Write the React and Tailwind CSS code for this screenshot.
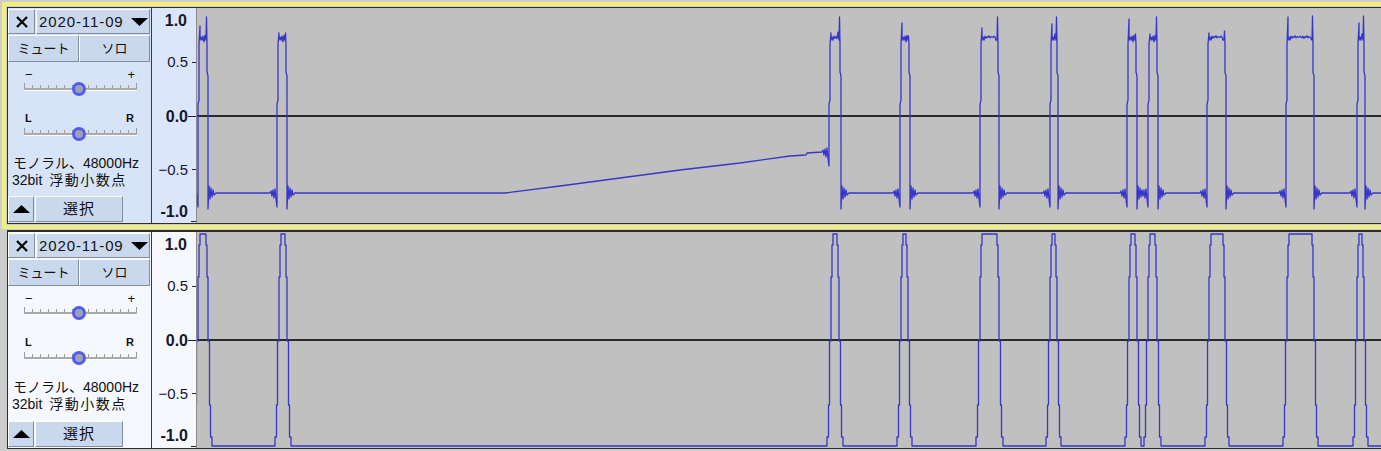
import React from "react";

const J = [0, 2, -2, 3, -1, 1, -3, 2, -1, 0, 1, -2];

// spiky square pulse (original recording)
function spiky({ a, b, sl, sr, base = 193 }) {
  const p = [
    [a - 7, base], [a - 6, base - 2], [a - 5, base + 3], [a - 4, base - 3], [a - 3, base + 5],
    [a - 2, base - 4], [a - 1, base + 6], [a, base + 14],
    [a, 104], [a + 1, 100], [a + 1, 44], [a + 2, sl], [a + 2, 40],
  ];
  for (let x = a + 3, i = 0; x < b - 1; x++, i++) {
    const edge = x - a < 5 || b - x < 4;
    p.push([x, 37 + J[i % J.length] * (edge ? 1.6 : 0.4)]);
  }
  p.push(
    [b - 1, 40], [b - 0.5, sr], [b, 44], [b, 72], [b + 1, 76], [b + 1, 209],
    [b + 2, 186], [b + 3, 199], [b + 4, 188], [b + 5, 197], [b + 6, 190], [b + 7, 195], [b + 9, 193]
  );
  return p;
}

const pulses1 = [
  { a: 198, b: 207, sl: 26, sr: 17 },
  { a: 277, b: 286, sl: 33, sr: 33 },
  { a: 829, b: 840, sl: 33, sr: 17, base: 152 },
  { a: 900, b: 909, sl: 23, sr: 36 },
  { a: 980, b: 998, sl: 28, sr: 17 },
  { a: 1050, b: 1057, sl: 24, sr: 17 },
  { a: 1127, b: 1136, sl: 19, sr: 34 },
  { a: 1148, b: 1157, sl: 34, sr: 17 },
  { a: 1207, b: 1225, sl: 33, sr: 31 },
  { a: 1286, b: 1313, sl: 17, sr: 16 },
  { a: 1357, b: 1364, sl: 23, sr: 16 },
];

const ramp = [
  [505, 193], [560, 186], [620, 178], [680, 170], [740, 163], [790, 156], [806, 155], [807, 153], [822, 152],
];

const wave1 = [
  ...spiky(pulses1[0]),
  ...spiky(pulses1[1]),
  ...ramp,
  ...pulses1.slice(2).flatMap(spiky),
  [1400, 193],
];

// clipped, stepped pulse (processed)
const LV = [446, 437, 405, 341, 277, 245, 234];
const UP = [0, 1.5, 2.5, 4, 5, 6];
function stepped([a, b]) {
  const p = [[a, 446]];
  UP.forEach((o, i) => p.push([a + o, LV[i]], [a + o, LV[i + 1]]));
  [...UP].reverse().forEach((o, i) => p.push([b - o, LV[6 - i]], [b - o, LV[5 - i]]));
  return p;
}

const pulses2 = [
  [194, 212], [275, 291], [827, 843], [897, 912], [976, 1003], [1046, 1061],
  [1125, 1141], [1144, 1161], [1205, 1229], [1283, 1318], [1353, 1368],
];

const wave2 = [[150, 446], ...pulses2.flatMap(stepped), [1400, 446]];

const pts = (arr) => arr.map(([x, y]) => `${x},${y}`).join(" ");

const btn =
  "flex items-center justify-center border border-t-white border-l-white border-r-[#7f8ca2] border-b-[#7f8ca2] bg-[#cad8ee]";

function Slider() {
  return (
    <svg width="143" height="18" className="block">
      <line x1="16" x2="129" y1="9" y2="9" stroke="#a9a9a9" strokeWidth="2" />
      <line x1="16" x2="129" y1="10.5" y2="10.5" stroke="#ffffff" strokeWidth="1" />
      {Array.from({ length: 15 }, (_, i) => (
        <line
          key={i}
          x1={16.5 + i * 8}
          x2={16.5 + i * 8}
          y1={i === 0 || i === 14 ? 3 : 5}
          y2="8"
          stroke="#9a9a9a"
          strokeWidth="1"
        />
      ))}
      <circle cx="71" cy="9" r="5.5" fill="#9ea2b4" stroke="#4f5cf3" strokeWidth="3" />
    </svg>
  );
}

function Panel({ selected }) {
  const bg = selected ? "bg-[#d7e3f7]" : "bg-[#f5f8fe]";
  return (
    <div className={`w-[143px] shrink-0 flex flex-col text-[#111] ${bg}`}>
      <div className="mt-px flex h-[25px]">
        <div className={`${btn} w-[27px]`}>
          <svg width="12" height="12" viewBox="0 0 12 12">
            <path d="M1 1 L11 11 M11 1 L1 11" stroke="#000" strokeWidth="2.2" />
          </svg>
        </div>
        <div className={`${btn} ml-px w-[114px] !justify-between pl-[2px] pr-[1px]`}>
          <span className="text-[15px] leading-none tracking-[0.9px]">2020-11-09</span>
          <svg width="17" height="8" viewBox="0 0 17 8">
            <polygon points="0,0 17,0 8.5,8" fill="#000" />
          </svg>
        </div>
      </div>
      <div className="mt-px flex h-[27px] text-[13px]">
        <div className={`${btn} w-[71px]`}>ミュート</div>
        <div className={`${btn} w-[71px]`}>ソロ</div>
      </div>
      <div className="mt-[7px] flex h-[11px] items-center justify-between pl-[17px] pr-[16px] text-[13px] leading-none">
        <span>−</span>
        <span>+</span>
      </div>
      <Slider />
      <div className="mt-[15px] flex h-[10px] items-center justify-between pl-[17px] pr-[17px] text-[11px] font-bold leading-none">
        <span>L</span>
        <span>R</span>
      </div>
      <div className="mt-[2px]">
        <Slider />
      </div>
      <div className="mt-[12px] pl-[5px] text-[14px] leading-[17px] whitespace-nowrap">
        <div>モノラル、48000Hz</div>
        <div className="-ml-px">
          32bit <span className="ml-[3px] tracking-[1.5px]">浮動小数点</span>
        </div>
      </div>
      <div className="mt-auto mb-px flex h-[26px]">
        <div className={`${btn} w-[26px]`}>
          <svg width="17" height="8" viewBox="0 0 17 8">
            <polygon points="0,8 17,8 8.5,0" fill="#000" />
          </svg>
        </div>
        <div className={`${btn} ml-px w-[88px] text-[15px] tracking-[1px]`}>選択</div>
      </div>
    </div>
  );
}

function Ruler({ selected, h }) {
  const bg = selected ? "bg-[#dbe6fb]" : "bg-[#f6f8fe]";
  return (
    <div className={`w-[45px] shrink-0 border-l border-[#3a3a3a] ${bg}`}>
      <svg width="44" height={h} className="block">
        <g fontFamily="Liberation Sans, Arial, sans-serif" fill="#15152a">
          <text x="35" y="18" textAnchor="end" fontSize="16" fontWeight="700">1.0</text>
          <text x="36" y="59" textAnchor="end" fontSize="15">0.5</text>
          <text x="36" y="114" textAnchor="end" fontSize="16" fontWeight="700">0.0</text>
          <text x="36" y="167" textAnchor="end" fontSize="15">−0.5</text>
          <text x="36" y="209" textAnchor="end" fontSize="16" fontWeight="700">-1.0</text>
        </g>
        <g stroke="#222" strokeWidth="1">
          <line x1="40" x2="44" y1="54.5" y2="54.5" />
          <line x1="36" x2="44" y1="108.5" y2="108.5" />
          <line x1="40" x2="44" y1="161.5" y2="161.5" />
          <line x1="39" x2="44" y1={h - 1.5} y2={h - 1.5} />
        </g>
      </svg>
    </div>
  );
}

function Wave({ points, top, h }) {
  return (
    <div className="flex-1 overflow-hidden border-l border-[#8c8c8c] bg-[#c0c0c0]">
      <svg width="1190" height={h} viewBox={`197 ${top} 1190 ${h}`} className="block">
        <line x1="197" x2="1400" y1={top + 108} y2={top + 108} stroke="#2a2a2a" strokeWidth="2" />
        <polyline points={pts(points)} fill="none" stroke="#3636cc" strokeWidth="1.3" strokeLinejoin="round" />
      </svg>
    </div>
  );
}

export default function App() {
  return (
    <div className="w-[1381px] h-[451px] overflow-hidden bg-[#cdcdcd] font-['Liberation_Sans','Noto_Sans_CJK_JP',sans-serif]">
      <div className="ml-[2px] mt-[2px] w-[1420px] border-4 border-r-0 border-[#efef7d] p-px">
        <div className="flex h-[217px] border border-r-0 border-[#2e2e2e]">
          <Panel selected />
          <Ruler selected h={215} />
          <Wave points={wave1} top={8} h={215} />
        </div>
      </div>
      <div className="ml-[7px] mt-px w-[1420px] flex h-[219px] border-t-2 border-b border-l border-[#2e2e2e]">
        <Panel />
        <Ruler h={216} />
        <Wave points={wave2} top={232} h={216} />
      </div>
    </div>
  );
}
